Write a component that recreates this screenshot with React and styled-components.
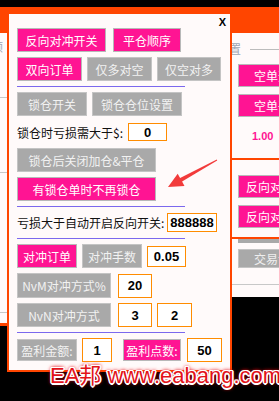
import React from 'react';
import styled, { createGlobalStyle } from 'styled-components';

const ORANGE = '#ff4500';
const PINK = '#ff1493';
const GRAY = '#a9a9a9';
const PAPER = '#fffafa';

const GlobalStyle = createGlobalStyle`
  html, body {
    margin: 0;
    padding: 0;
    background: #000;
  }
`;

const Desktop = styled.div`
  position: relative;
  width: 279px;
  height: 401px;
  overflow: hidden;
  background: #000;
  font-family: "Noto Sans CJK SC", "Noto Sans", sans-serif;
`;

const TitleBand = styled.div`
  position: absolute;
  top: 7px;
  left: 0;
  right: 0;
  height: 26px;
  background: ${ORANGE};
`;

const LeftPane = styled.div`
  position: absolute;
  left: 0;
  top: 33px;
  width: 7px;
  height: 290px;
  background: ${PAPER};
  border-bottom: 3px solid ${ORANGE};
  overflow: hidden;
  display: flex;
  flex-direction: column;
`;

const GhostGlyph = styled.span`
  margin-top: ${(p) => p.$mt || 0}px;
  margin-left: ${(p) => p.$ml || 0}px;
  font-size: 12px;
  line-height: 12px;
  color: #9ea6b4;
  white-space: nowrap;
`;

const GhostLine = styled.div`
  margin-top: ${(p) => p.$mt || 0}px;
  height: 1px;
  flex-shrink: 0;
  background: ${(p) => p.$color || '#c8c8c8'};
  width: ${(p) => (p.$w ? `${p.$w}px` : '100%')};
`;

const RightPane = styled.div`
  position: absolute;
  left: 232px;
  top: 33px;
  width: 47px;
  height: 264px;
  background: ${PAPER};
  overflow: hidden;
  display: flex;
  flex-direction: column;
`;

const Legend = styled.div`
  margin-top: 10px;
  height: 12px;
  display: flex;
  align-items: center;
  gap: 9px;
  margin-left: -3px;
`;

const SideBtn = styled.div`
  margin-top: ${(p) => p.$mt || 0}px;
  margin-left: 6px;
  width: 80px;
  height: ${(p) => p.$h}px;
  flex-shrink: 0;
  box-sizing: border-box;
  padding-left: ${(p) => p.$pl}px;
  display: flex;
  align-items: center;
  font-size: 12px;
  white-space: nowrap;
  color: ${(p) => (p.$tone === 'pink' ? '#fff' : '#eee')};
  background: ${(p) => (p.$tone === 'pink' ? PINK : GRAY)};
  border: 1px solid ${(p) => (p.$tone === 'pink' ? '#b8b8b8' : '#c4c4c4')};
`;

const Lots = styled.div`
  margin-top: 13px;
  margin-left: 20px;
  height: 12px;
  line-height: 12px;
  font-family: "Liberation Sans", sans-serif;
  font-weight: bold;
  font-size: 11px;
  color: ${PINK};
`;

const OrangeRule = styled.div`
  margin-top: ${(p) => p.$mt}px;
  height: 2px;
  flex-shrink: 0;
  background: ${ORANGE};
`;

const Stub = styled.div`
  margin-left: 6px;
  width: 80px;
  height: 4px;
  flex-shrink: 0;
  background: ${GRAY};
`;

const Dialog = styled.div`
  position: absolute;
  left: 7px;
  top: 12px;
  width: 225px;
  height: 360px;
  box-sizing: border-box;
  border: 2px solid ${ORANGE};
  background: ${PAPER};
`;

const CloseX = styled.span`
  position: absolute;
  top: 3px;
  right: 4px;
  font-family: "Liberation Sans", sans-serif;
  font-weight: bold;
  font-size: 11px;
  line-height: 11px;
  color: #000;
`;

const Column = styled.div`
  display: flex;
  flex-direction: column;
  gap: 5px;
  padding: 14px 0 0 8px;
`;

const Row = styled.div`
  display: flex;
  align-items: center;
  height: ${(p) => p.$h}px;
  gap: ${(p) => (p.$gap === undefined ? 5 : p.$gap)}px;
`;

const Btn = styled.div`
  width: ${(p) => p.$w}px;
  height: ${(p) => p.$h || 24}px;
  box-sizing: border-box;
  flex-shrink: 0;
  display: flex;
  align-items: center;
  justify-content: center;
  margin-left: ${(p) => p.$ml || 0}px;
  font-size: 12px;
  white-space: nowrap;
  color: ${(p) => (p.$tone === 'pink' ? '#fff' : '#f2f2f2')};
  background: ${(p) => (p.$tone === 'pink' ? PINK : GRAY)};
  border: 1px solid ${(p) => (p.$tone === 'pink' ? '#b8b8b8' : '#c4c4c4')};
`;

const Label = styled.span`
  width: ${(p) => p.$w}px;
  flex-shrink: 0;
  font-size: 12px;
  color: #111;
  white-space: nowrap;
`;

const Field = styled.div`
  width: ${(p) => p.$w}px;
  height: ${(p) => p.$h}px;
  box-sizing: border-box;
  flex-shrink: 0;
  display: flex;
  align-items: center;
  justify-content: center;
  margin-left: ${(p) => p.$ml || 0}px;
  border: 1px solid #ff8c00;
  background: #fff;
  font-family: "Liberation Sans Narrow", "Liberation Sans", sans-serif;
  font-weight: bold;
  font-size: 13px;
  color: #000;
`;

const Divider = styled.div`
  width: 168px;
  height: 1px;
  background: #7b68ee;
`;

const Arrow = styled.svg`
  position: absolute;
  left: 160px;
  top: 150px;
  width: 65px;
  height: 45px;
  pointer-events: none;
`;

const Watermark = styled.div`
  position: absolute;
  left: 50px;
  top: 362px;
  font-family: "Liberation Sans", "Noto Sans CJK SC", sans-serif;
  font-size: 22px;
  line-height: 28px;
  color: #e3121a;
  white-space: nowrap;
  text-shadow:
    1.5px 0 0 #fff, -1.5px 0 0 #fff, 0 1.5px 0 #fff, 0 -1.5px 0 #fff,
    1px 1px 0 #fff, -1px -1px 0 #fff, 1px -1px 0 #fff, -1px 1px 0 #fff,
    0 0 3px #e3121a, 0 0 4px #e3121a, 0 0 4px #e3121a;
`;

const App = () => {
  return (
    <Desktop>
      <GlobalStyle />
      <TitleBand />

      <LeftPane>
        <GhostGlyph $mt={8} $ml={-9}>顺</GhostGlyph>
        <GhostLine $mt={44} />
        <GhostLine $mt={74} />
        <GhostLine $mt={139} />
      </LeftPane>

      <RightPane>
        <Legend>
          <GhostGlyph>置</GhostGlyph>
          <GhostLine $w={40} $color="#bcbcbc" />
        </Legend>
        <SideBtn $tone="pink" $mt={9} $h={23} $pl={15}>空单开关</SideBtn>
        <SideBtn $tone="pink" $mt={7} $h={23} $pl={15}>空单平仓</SideBtn>
        <Lots>1.00</Lots>
        <OrangeRule $mt={16} />
        <SideBtn $tone="pink" $mt={15} $h={23} $pl={7}>反向对冲</SideBtn>
        <SideBtn $tone="pink" $mt={7} $h={23} $pl={7}>反向对冲</SideBtn>
        <OrangeRule $mt={9} />
        <Stub />
        <SideBtn $tone="gray" $mt={6} $h={19} $pl={15}>交易设置</SideBtn>
        <GhostLine $mt={16} />
      </RightPane>

      <Dialog>
        <CloseX>X</CloseX>
        <Column>
          <Row $h={24} $gap={7}>
            <Btn $tone="pink" $w={89}>反向对冲开关</Btn>
            <Btn $tone="pink" $w={68}>平仓顺序</Btn>
          </Row>
          <Row $h={24}>
            <Btn $tone="pink" $w={65}>双向订单</Btn>
            <Btn $w={65}>仅多对空</Btn>
            <Btn $w={64}>仅空对多</Btn>
          </Row>
          <Divider />
          <Row $h={24}>
            <Btn $w={70}>锁仓开关</Btn>
            <Btn $w={90}>锁仓仓位设置</Btn>
          </Row>
          <Row $h={22} $gap={0}>
            <Label $w={111}>锁仓时亏损需大于$:</Label>
            <Field $w={39} $h={18}>0</Field>
          </Row>
          <Row $h={24}>
            <Btn $w={139}>锁仓后关闭加仓&amp;平仓</Btn>
          </Row>
          <Row $h={24}>
            <Btn $tone="pink" $w={139}>有锁仓单时不再锁仓</Btn>
          </Row>
          <Divider />
          <Row $h={21} $gap={0}>
            <Label $w={150}>亏损大于自动开启反向开关:</Label>
            <Field $w={50} $h={19}>888888</Field>
          </Row>
          <Divider />
          <Row $h={24}>
            <Btn $tone="pink" $w={60}>对冲订单</Btn>
            <Btn $w={60}>对冲手数</Btn>
            <Field $w={39} $h={21}>0.05</Field>
          </Row>
          <Row $h={25} $gap={7}>
            <Btn $w={94} $h={25}>NvM对冲方式%</Btn>
            <Field $w={34} $h={24}>20</Field>
          </Row>
          <Row $h={24} $gap={7}>
            <Btn $w={94}>NvN对冲方式</Btn>
            <Field $w={34} $h={24}>3</Field>
            <Field $w={35} $h={24} $ml={-2}>2</Field>
          </Row>
          <Divider />
          <Row $h={24}>
            <Btn $w={60} $h={22}>盈利金额:</Btn>
            <Field $w={30} $h={24}>1</Field>
            <Btn $tone="pink" $w={58} $h={22} $ml={6}>盈利点数:</Btn>
            <Field $w={35} $h={24} $ml={1}>50</Field>
          </Row>
        </Column>
      </Dialog>

      <Arrow viewBox="160 150 65 45">
        <polygon
          points="216.8,159.6 180.1,178.0 177.7,173.7 168,187 184.5,185.9 182.1,181.5 217.2,160.4"
          fill="#f23b3b"
        />
      </Arrow>

      <Watermark>EA邦 www.eabang.com</Watermark>
    </Desktop>
  );
};

export default App;
